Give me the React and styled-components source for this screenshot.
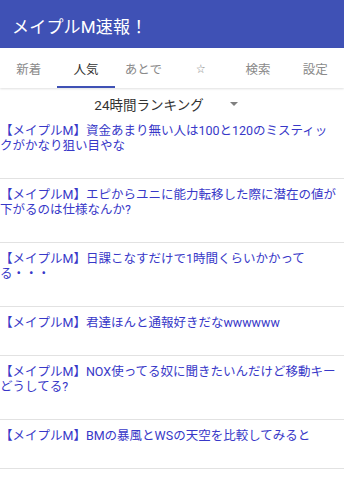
import React from 'react';
import styled, { createGlobalStyle } from 'styled-components';

const GlobalStyle = createGlobalStyle`
  html, body {
    margin: 0;
    padding: 0;
    background: #ffffff;
  }
  body {
    font-family: Roboto, "Noto Sans CJK JP", sans-serif;
  }
`;

const tabs = ['新着', '人気', 'あとで', '☆', '検索', '設定'];

const articles = [
  '【メイプルM】資金あまり無い人は100と120のミスティックがかなり狙い目やな',
  '【メイプルM】エピからユニに能力転移した際に潜在の値が下がるのは仕様なんか?',
  '【メイプルM】日課こなすだけで1時間くらいかかってる・・・',
  '【メイプルM】君達ほんと通報好きだなwwwwww',
  '【メイプルM】NOX使ってる奴に聞きたいんだけど移動キーどうしてる?',
  '【メイプルM】BMの暴風とWSの天空を比較してみると',
];

function App() {
  return (
    <Page>
      <GlobalStyle />
      <Header>
        <Title>メイプルM速報！</Title>
      </Header>
      <TabBar>
        {tabs.map((tab, i) => (
          <Tab key={tab} active={i === 1} small={tab === '☆'}>
            {tab}
          </Tab>
        ))}
      </TabBar>
      <RankingRow>
        <RankingLabel>24時間ランキング</RankingLabel>
        <Caret />
      </RankingRow>
      <ArticleList>
        {articles.map(title => (
          <ArticleItem key={title}>
            <ArticleLink href="#">{title}</ArticleLink>
          </ArticleItem>
        ))}
      </ArticleList>
    </Page>
  );
}

const Page = styled.div`
  width: 344px;
  min-height: 500px;
  background: #ffffff;
`;

const Header = styled.header`
  display: flex;
  align-items: center;
  height: 48px;
  padding: 3px 12px 0;
  box-sizing: border-box;
  background: #3f51b5;
`;

const Title = styled.h1`
  margin: 0;
  font-size: 17px;
  font-weight: 400;
  color: #ffffff;
  letter-spacing: 0.2px;
`;

const TabBar = styled.nav`
  display: grid;
  grid-template-columns: repeat(6, 1fr);
  height: 40px;
  background: #ffffff;
  box-shadow: 0 1px 2px rgba(0, 0, 0, 0.12);
  position: relative;
`;

const Tab = styled.div`
  display: flex;
  align-items: center;
  justify-content: center;
  padding-top: 2px;
  font-size: ${p => (p.small ? '9px' : '12.5px')};
  color: ${p => (p.active ? '#333333' : '#8a8a8a')};
  border-bottom: 2px solid ${p => (p.active ? '#3f51b5' : 'transparent')};
`;

const RankingRow = styled.div`
  display: flex;
  align-items: center;
  justify-content: center;
  gap: 26px;
  height: 27px;
  padding: 4px 12px 0 0;
  box-sizing: border-box;
`;

const RankingLabel = styled.span`
  font-size: 13.5px;
  color: #333333;
`;

const Caret = styled.span`
  width: 0;
  height: 0;
  border-left: 4px solid transparent;
  border-right: 4px solid transparent;
  border-top: 4px solid #808080;
`;

const ArticleList = styled.ul`
  margin: 0;
  padding: 0;
  list-style: none;
`;

const ArticleItem = styled.li`
  padding: 8px 6px 25px 0;
  font-size: 12.5px;
  line-height: 15px;
  border-bottom: 1px solid #e2e2e2;
`;

const ArticleLink = styled.a`
  color: #3838c8;
  text-decoration: none;
`;

export default App;
